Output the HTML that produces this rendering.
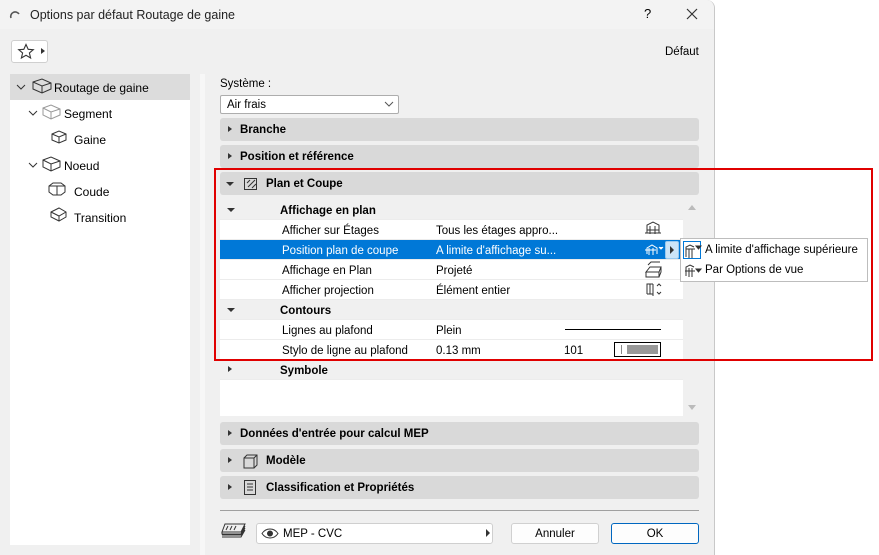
<!DOCTYPE html>
<html><head><meta charset="utf-8">
<style>
*{margin:0;padding:0;box-sizing:border-box}
body{width:879px;height:555px;background:#fff;font-family:"Liberation Sans",sans-serif;font-size:12px;color:#000;position:relative;overflow:hidden}
.a{position:absolute}
.dlg{left:0;top:0;width:715px;height:555px;background:#f0f0f0;border-right:1px solid #c8c8c8;border-top-right-radius:8px}
.title{left:0;top:0;width:714px;height:29px;background:#f3f3f3;border-top-right-radius:8px}
.hdr{left:220px;width:479px;height:23px;background:#d9d9d9;border-radius:3px;font-weight:bold;font-size:11.5px;line-height:25px}
.tri{position:absolute;left:8px;top:8px;width:0;height:0;border-left:4px solid #333;border-top:3.5px solid transparent;border-bottom:3.5px solid transparent}
.trid{position:absolute;width:0;height:0;border-top:4px solid #333;border-left:4px solid transparent;border-right:4px solid transparent}
.row{left:220px;width:463px;height:20px;line-height:22px;background:#fff;border-bottom:1px solid #ececec;font-size:11.5px}
.grp{background:#f0f0f0;font-weight:bold}
.row span{position:absolute}
.tree{font-size:12px}
</style></head><body>
<div class="a dlg"></div>
<div class="a title"></div>
<svg class="a" style="left:9px;top:8px" width="12" height="12"><path d="M2 10 A4.5 4.5 0 0 1 10 6" fill="none" stroke="#555" stroke-width="1.6"/></svg>
<div class="a" style="left:30px;top:8px;font-size:12.5px;color:#222">Options par défaut Routage de gaine</div>
<div class="a" style="left:644px;top:6px;font-size:13px">?</div>
<svg class="a" style="left:686px;top:8px" width="12" height="12"><path d="M1 1L11 11M11 1L1 11" stroke="#333" stroke-width="1.2"/></svg>
<div class="a" style="left:11px;top:40px;width:37px;height:23px;background:#fff;border:1px solid #cfcfcf;border-radius:3px"></div>
<svg class="a" style="left:17px;top:43px" width="18" height="17"><path d="M9 1.5L11.2 6.3 16.3 6.7 12.4 10 13.6 15 9 12.3 4.4 15 5.6 10 1.7 6.7 6.8 6.3Z" fill="none" stroke="#333" stroke-width="1.1"/></svg>
<div class="a" style="left:41px;top:48px;border-left:4px solid #333;border-top:3.5px solid transparent;border-bottom:3.5px solid transparent"></div>
<div class="a" style="left:665px;top:46px;font-size:11.5px">Défaut</div>

<div class="a" style="left:10px;top:74px;width:180px;height:471px;background:#fff"></div>
<div class="a" style="left:10px;top:74px;width:180px;height:26px;background:#dcdcdc"></div>
<div class="a" style="left:200px;top:74px;width:5px;height:481px;background:#f7f7f7"></div>
<svg class="a" width="200" height="240" style="left:0;top:74px">
<g fill="none" stroke="#333" stroke-width="1">
<path d="M17 11l4 4 4-4"/>
<path d="M33 8l9-3 9 4v6l-9 4-9-4z M33 8l9 4 9-3 M42 12v7"/>
<path d="M29 37l4 4 4-4"/>
<path d="M43 34l8-3 9 4v6l-9 4-8-4z M43 34l8 4 9-3 M51 38v7" stroke="#999"/>
<path d="M52 60l7-3 7 3v6l-7 3-7-3z M52 60l7 3 7-3 M59 63v6"/>
<path d="M29 89l4 4 4-4"/>
<path d="M43 86l8-3 9 4v6l-9 4-8-4z M43 86l8 4 9-3 M51 90v7"/>
<path d="M49 112l4-3h8l4 3v6l-4 3h-8l-4-3z M49 112h16 M57 112v9"/>
<path d="M51 138l8-4 7 4v5l-7 4-8-4z M51 138l8 4 7-4 M59 142v5"/>
</g></svg>
<div class="a tree" style="left:54px;top:81px">Routage de gaine</div>
<div class="a tree" style="left:64px;top:107px">Segment</div>
<div class="a tree" style="left:74px;top:133px">Gaine</div>
<div class="a tree" style="left:64px;top:159px">Noeud</div>
<div class="a tree" style="left:74px;top:185px">Coude</div>
<div class="a tree" style="left:74px;top:211px">Transition</div>

<div class="a" style="left:220px;top:78px;font-size:11.5px">Système :</div>
<div class="a" style="left:220px;top:95px;width:179px;height:19px;background:#fff;border:1px solid #adadad;border-radius:2px;font-size:11.5px;line-height:19px;padding-left:6px">Air frais</div>
<svg class="a" style="left:384px;top:101px" width="10" height="7"><path d="M1 1l4 4 4-4" fill="none" stroke="#555"/></svg>

<div class="a hdr" style="top:118px"><div class="tri"></div><span style="margin-left:20px">Branche</span></div>
<div class="a hdr" style="top:145px"><div class="tri"></div><span style="margin-left:20px">Position et référence</span></div>
<div class="a hdr" style="top:172px"><div class="trid" style="left:6px;top:10px"></div>
<svg class="a" style="left:23px;top:4px" width="16" height="16"><g fill="none" stroke="#333"><rect x="1.5" y="2.5" width="12" height="11"/><path d="M5 11l7-7M9 12l4-4M4 7l3-3"/></g></svg>
<span style="margin-left:46px">Plan et Coupe</span></div>

<div class="a" style="left:220px;top:200px;width:463px;height:216px;background:#fff"></div>
<div class="a" style="left:683px;top:200px;width:16px;height:216px;background:#f0f0f0"></div>
<div class="a" style="left:688px;top:205px;border-bottom:5px solid #bbb;border-left:4px solid transparent;border-right:4px solid transparent"></div>
<div class="a" style="left:688px;top:405px;border-top:5px solid #bbb;border-left:4px solid transparent;border-right:4px solid transparent"></div>

<div class="a row grp" style="top:200px"><div class="trid" style="left:7px;top:8px"></div><span style="left:60px">Affichage en plan</span></div>
<div class="a row" style="top:220px"><span style="left:62px">Afficher sur Étages</span><span style="left:216px">Tous les étages appro...</span></div>
<div class="a row" style="top:240px;background:#0078d7;color:#fff"><span style="left:62px">Position plan de coupe</span><span style="left:216px">A limite d'affichage su...</span></div>
<div class="a row" style="top:260px"><span style="left:62px">Affichage en Plan</span><span style="left:216px">Projeté</span></div>
<div class="a row" style="top:280px"><span style="left:62px">Afficher projection</span><span style="left:216px">Élément entier</span></div>
<div class="a row grp" style="top:300px"><div class="trid" style="left:7px;top:8px"></div><span style="left:60px">Contours</span></div>
<div class="a row" style="top:320px"><span style="left:62px">Lignes au plafond</span><span style="left:216px">Plein</span></div>
<div class="a row" style="top:340px"><span style="left:62px">Stylo de ligne au plafond</span><span style="left:216px">0.13 mm</span><span style="left:344px">101</span></div>
<div class="a row grp" style="top:360px"><div class="tri" style="left:8px;top:6px"></div><span style="left:60px">Symbole</span></div>
<div class="a" style="left:565px;top:329px;width:96px;height:1px;background:#000"></div>
<div class="a" style="left:614px;top:342px;width:47px;height:15px;border:1px solid #000;background:#fff"></div>
<div class="a" style="left:621px;top:345px;width:1px;height:9px;background:#888"></div>
<div class="a" style="left:627px;top:345px;width:31px;height:9px;background:#999"></div>

<svg class="a" style="left:640px;top:220px" width="30" height="80"><g fill="none" stroke="#333">
<path d="M7 13V5l6-3 6 3v8M5 13h16M10 6v8M15 6v8M7 10h12"/>
<path d="M7 34v-6l5-3 5 3v6M5 30h11M9 28v7M13 28v7" stroke="#fff"/><path d="M19 27l2 2 2-2" fill="#fff" stroke="#fff"/>
<path d="M6 52l4-5h11l-2 5zM6 52v5h13v-5M19 52l2-5v5l-2 5M8 45l3-3h9" />
<path d="M7 74V64h6M7 74h6M13 64v12M10 64v10M17 66l2-2 2 2M17 72l2 2 2-2"/>
</g></svg>
<div class="a" style="left:665px;top:241px;width:14px;height:18px;background:#cce4f7;border:1px solid #99c9ef;border-radius:2px"></div>
<div class="a" style="left:670px;top:246px;border-left:4px solid #333;border-top:4px solid transparent;border-bottom:4px solid transparent"></div>

<div class="a" style="left:680px;top:238px;width:188px;height:44px;background:#fff;border:1px solid #bdbdbd"></div>
<div class="a" style="left:683px;top:241px;width:18px;height:18px;border:1px solid #0078d7"></div>
<svg class="a" style="left:683px;top:241px" width="20" height="40"><g fill="none" stroke="#333">
<path d="M3 16V6l4-2 4 2M3 8h9M6 8v9M9 8v9"/><path d="M13 5h5l-2.5 3z" fill="#333"/>
<path d="M3 35V26l4-2 4 2M2 30h10M6 27v9M9 27v9"/><path d="M13 28h5l-2.5 3z" fill="#333"/>
</g></svg>
<div class="a" style="left:705px;top:244px;font-size:11.5px">A limite d'affichage supérieure</div>
<div class="a" style="left:705px;top:264px;font-size:11.5px">Par Options de vue</div>

<div class="a" style="left:214px;top:168px;width:659px;height:193px;border:2px solid #e00000"></div>

<div class="a hdr" style="top:422px"><div class="tri"></div><span style="margin-left:20px">Données d'entrée pour calcul MEP</span></div>
<div class="a hdr" style="top:449px"><div class="tri"></div>
<svg class="a" style="left:22px;top:4px" width="16" height="16"><g fill="none" stroke="#333"><path d="M2 5h10v10H2zM2 5l3-3h10v10l-3 3M12 5l3-3"/></g></svg>
<span style="margin-left:46px">Modèle</span></div>
<div class="a hdr" style="top:476px"><div class="tri"></div>
<svg class="a" style="left:22px;top:3px" width="16" height="17"><g fill="none" stroke="#333"><rect x="2.5" y="1.5" width="11" height="14"/><path d="M5 5h6M5 8h6M5 11h6"/></g></svg>
<span style="margin-left:46px">Classification et Propriétés</span></div>
<div class="a" style="left:220px;top:510px;width:479px;height:1px;background:#a0a0a0"></div>

<svg class="a" style="left:221px;top:522px" width="28" height="18"><g fill="none" stroke="#333"><path d="M4 2h20l-4 8H1zM1 10v2h19l4-8M1 13h19l4-7M1 15h19l4-7M7 4l-2 4M11 4l-2 4M15 4l-2 4"/></g></svg>
<div class="a" style="left:256px;top:523px;width:237px;height:21px;background:#fff;border:1px solid #cfcfcf;border-radius:3px"></div>
<svg class="a" style="left:261px;top:528px" width="18" height="11"><g fill="none" stroke="#333"><path d="M1 5.5C5-0.5 13-0.5 17 5.5 13 11.5 5 11.5 1 5.5z"/><circle cx="9" cy="5.5" r="2.5" fill="#333"/></g></svg>
<div class="a" style="left:283px;top:528px;font-size:11.5px">MEP - CVC</div>
<div class="a" style="left:486px;top:529px;border-left:4px solid #333;border-top:4px solid transparent;border-bottom:4px solid transparent"></div>
<div class="a" style="left:511px;top:523px;width:88px;height:21px;background:#fdfdfd;border:1px solid #d0d0d0;border-radius:3px;text-align:center;line-height:21px;font-size:11.5px">Annuler</div>
<div class="a" style="left:611px;top:523px;width:88px;height:21px;background:#fdfdfd;border:1px solid #0067c0;border-radius:3px;text-align:center;line-height:21px;font-size:11.5px">OK</div>
</body></html>
